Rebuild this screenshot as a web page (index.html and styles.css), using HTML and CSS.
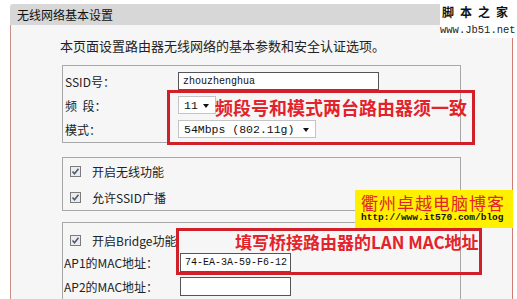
FILE: index.html
```html
<!DOCTYPE html>
<html lang="zh-CN">
<head>
  <meta charset="UTF-8">
  <title>无线网络基本设置</title>
  <link rel="stylesheet" href="styles.css">
</head>
<body>
  <div class="page">
    <div class="panel">
      <div class="panel-head">无线网络基本设置</div>
      <div class="panel-body">
        <p class="intro">本页面设置路由器无线网络的基本参数和安全认证选项。</p>

        <div class="group group-basic">
          <div class="row">
            <span class="label">SSID号：</span>
            <span class="field text ssid">zhouzhenghua</span>
          </div>
          <div class="row">
            <span class="label">频&nbsp;&nbsp;段：</span>
            <span class="field select channel">11<i class="caret"></i></span>
          </div>
          <div class="row">
            <span class="label">模式：</span>
            <span class="field select mode">54Mbps (802.11g)<i class="caret"></i></span>
          </div>
        </div>

        <div class="group group-switch">
          <div class="check-row">
            <svg class="check" width="11" height="11" viewBox="0 0 11 11"><rect x="0.5" y="0.5" width="10" height="10" fill="#ececec" stroke="#7c7c7c"/><polyline points="2.5,5.5 4.5,7.8 8.5,2.8" fill="none" stroke="#4b5a78" stroke-width="1.6"/></svg>
            <span>开启无线功能</span>
          </div>
          <div class="check-row">
            <svg class="check" width="11" height="11" viewBox="0 0 11 11"><rect x="0.5" y="0.5" width="10" height="10" fill="#ececec" stroke="#7c7c7c"/><polyline points="2.5,5.5 4.5,7.8 8.5,2.8" fill="none" stroke="#4b5a78" stroke-width="1.6"/></svg>
            <span>允许SSID广播</span>
          </div>
        </div>

        <div class="group group-bridge">
          <div class="check-row bridge">
            <svg class="check" width="11" height="11" viewBox="0 0 11 11"><rect x="0.5" y="0.5" width="10" height="10" fill="#ececec" stroke="#7c7c7c"/><polyline points="2.5,5.5 4.5,7.8 8.5,2.8" fill="none" stroke="#4b5a78" stroke-width="1.6"/></svg>
            <span>开启Bridge功能</span>
          </div>
          <div class="row">
            <span class="label">AP1的MAC地址：</span>
            <span class="field text mac">74-EA-3A-59-F6-12</span>
          </div>
          <div class="row">
            <span class="label">AP2的MAC地址：</span>
            <span class="field text mac"></span>
          </div>
        </div>
      </div>
    </div>

    <!-- annotations drawn over the screenshot -->
    <div class="note note-band">频段号和模式两台路由器须一致</div>
    <div class="note note-mac">填写桥接路由器的LAN MAC地址</div>
    <div class="stamp">
      <div class="stamp-title">衢州卓越电脑博客</div>
      <div class="stamp-url">http://www.it570.com/blog</div>
    </div>
    <div class="watermark">
      <div class="wm-title">脚本之家</div>
      <div class="wm-url">www.Jb51.net</div>
    </div>
  </div>
</body>
</html>
```

FILE: styles.css
```css
body {
  margin: 0;
  background-color: #fff;
  color: #222;
  font-family: "Noto Sans CJK SC", "Liberation Sans", sans-serif;
  font-size: 12px;
  overflow: hidden;
}
.page {
  position: relative;
  width: 517px;
  height: 299px;
  overflow: hidden;
}
.panel {
  margin: 4px 0 0 10px;
  width: 503px;
}
.panel-head {
  height: 21px;
  line-height: 21px;
  padding-left: 7px;
  background-color: #d7d7d7;
  border-radius: 3px 3px 0 0;
  font-size: 12px;
  color: #111;
}
.panel-body {
  background-color: #f6f6f6;
  border-left: 1px solid #c99086;
  border-right: 1px solid #d47a72;
  height: 300px;
  padding-top: 11px;
}
.intro {
  margin: 0 0 9px 49px;
  line-height: 20px;
  font-size: 13px;
}
.group {
  margin-left: 51px;
  width: 399px;
  border: 1px solid #a8a8a8;
  box-sizing: border-box;
}
.group-basic { padding: 3px 0 1px 2px; }
.group-switch { margin-top: 14px; }
.group-bridge { margin-top: 11px; padding: 7px 0 20px 1px; }

.row {
  display: flex;
  align-items: center;
  height: 24px;
}
.label { width: 113px; flex: none; }
.group-bridge .label { width: 116px; }

.field {
  display: flex;
  align-items: center;
  box-sizing: border-box;
  background-color: #fff;
  font-family: "Liberation Mono", monospace;
  color: #111;
}
.text {
  height: 19px;
  border: 1px solid #555;
  padding-left: 4px;
  font-size: 10px;
}
.ssid { width: 201px; height: 18px; }
.mac { width: 111px; }
.select {
  height: 18px;
  border: 1px solid #c4c4c4;
  padding-left: 5px;
  font-size: 11.5px;
  position: relative;
}
.channel { width: 38px; }
.mode { width: 138px; }
.caret {
  position: absolute;
  right: 6px;
  top: 7px;
  border-left: 3.5px solid transparent;
  border-right: 3.5px solid transparent;
  border-top: 4px solid #111;
}

.check-row {
  display: flex;
  align-items: center;
  height: 26px;
  padding-left: 7px;
}
.check-row.bridge { height: 20px; padding-left: 6px; }
.check { flex: none; margin-right: 11px; }

.note {
  position: absolute;
  box-sizing: border-box;
  border: 3px solid #d2202b;
  color: #e3232c;
  font-weight: bold;
  font-size: 18px;
  line-height: 22px;
}
.note-band {
  left: 167px;
  top: 90px;
  width: 308px;
  height: 55px;
  padding: 3px 0 0 45px;
}
.note-mac {
  left: 176px;
  top: 228px;
  width: 306px;
  height: 47px;
  padding: 0 0 0 56px;
  font-size: 17px;
}
.stamp {
  position: absolute;
  left: 355px;
  top: 190px;
  width: 158px;
  height: 38px;
  background-color: #fff000;
  padding-left: 6px;
  box-sizing: border-box;
}
.stamp-title {
  color: #e3232c;
  font-size: 17px;
  letter-spacing: 1px;
  line-height: 19px;
  margin-top: 3px;
}
.stamp-url {
  font-family: "Liberation Mono", monospace;
  font-weight: bold;
  font-size: 9.5px;
  line-height: 12px;
  color: #111;
}
.watermark {
  position: absolute;
  left: 440px;
  top: 0;
  width: 77px;
  height: 38px;
  background-color: #fff;
}
.wm-title {
  margin: 4px 0 0 2px;
  font-size: 12px;
  font-weight: bold;
  letter-spacing: 6px;
  line-height: 16px;
  color: #111;
  white-space: nowrap;
}
.wm-url {
  margin-top: 4px;
  font-family: "Liberation Mono", monospace;
  font-size: 10.5px;
  line-height: 12px;
  color: #222;
  white-space: nowrap;
}
```
